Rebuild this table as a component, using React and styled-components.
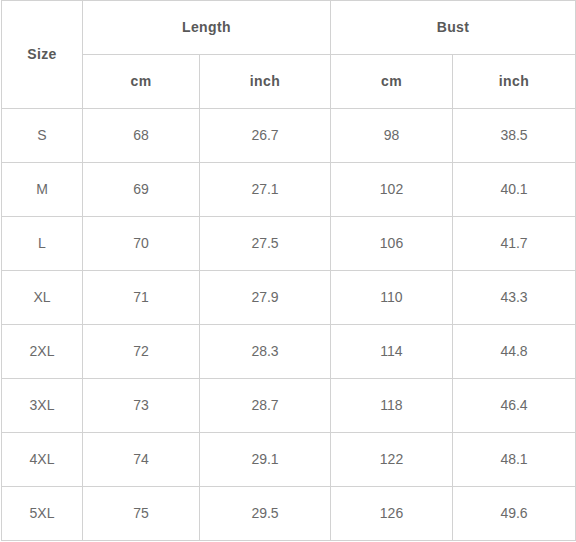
import React from 'react'
import styled, { createGlobalStyle } from 'styled-components'

const GlobalStyle = createGlobalStyle`
  html, body {
    margin: 0;
    padding: 0;
    background: #fff;
  }
  body {
    font-family: "Liberation Sans", Arial, sans-serif;
  }
`

const lineColor = '#d2d2d2'

const Wrap = styled.div`
  padding: 0 0 0 1px;
`

const Table = styled.table`
  border-collapse: collapse;
  table-layout: fixed;
  width: 574px;
  font-size: 14px;
  color: #6a6a6a;
`

const Col = styled.col`
  width: ${p => p.$w}px;
`

const Row = styled.tr`
  height: 54px;
`

const Cell = styled.td`
  border: 1px solid ${lineColor};
  padding: 0 0 2px;
  text-align: center;
  vertical-align: middle;
  line-height: 16px;
`

const Head = styled.th`
  border: 1px solid ${lineColor};
  padding: 0 0 2px;
  text-align: center;
  vertical-align: middle;
  font-weight: bold;
  letter-spacing: 0.4px;
  color: #595959;
  line-height: 16px;
`

const rows = [
  ['S', '68', '26.7', '98', '38.5'],
  ['M', '69', '27.1', '102', '40.1'],
  ['L', '70', '27.5', '106', '41.7'],
  ['XL', '71', '27.9', '110', '43.3'],
  ['2XL', '72', '28.3', '114', '44.8'],
  ['3XL', '73', '28.7', '118', '46.4'],
  ['4XL', '74', '29.1', '122', '48.1'],
  ['5XL', '75', '29.5', '126', '49.6'],
]

export default function App() {
  return (
    <Wrap>
      <GlobalStyle />
      <Table>
        <colgroup>
          <Col $w={81} />
          <Col $w={117} />
          <Col $w={131} />
          <Col $w={122} />
          <Col $w={123} />
        </colgroup>
        <thead>
          <Row>
            <Head rowSpan={2}>Size</Head>
            <Head colSpan={2}>Length</Head>
            <Head colSpan={2}>Bust</Head>
          </Row>
          <Row>
            <Head>cm</Head>
            <Head>inch</Head>
            <Head>cm</Head>
            <Head>inch</Head>
          </Row>
        </thead>
        <tbody>
          {rows.map(r => (
            <Row key={r[0]}>
              {r.map((v, i) => (
                <Cell key={i}>{v}</Cell>
              ))}
            </Row>
          ))}
        </tbody>
      </Table>
    </Wrap>
  )
}
